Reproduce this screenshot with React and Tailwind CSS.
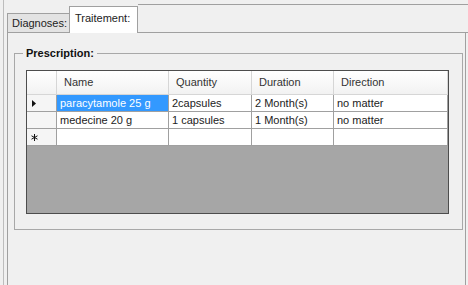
import React from 'react'

const columns = [
  { title: 'Name', width: 'w-[112px]' },
  { title: 'Quantity', width: 'w-[83px]' },
  { title: 'Duration', width: 'w-[82px]' },
  { title: 'Direction', width: 'w-[114px]' },
]

const rows = [
  { marker: 'current', cells: ['paracytamole 25 g', '2capsules', '2 Month(s)', 'no matter'] },
  { marker: null, cells: ['medecine 20 g', '1 capsules', '1 Month(s)', 'no matter'] },
  { marker: 'new', cells: ['', '', '', ''] },
]

const RowMarker = ({ type }) => {
  if (type === 'current') {
    return (
      <svg width="4" height="7" viewBox="0 0 4 7" className="ml-[5px]">
        <path d="M0 0 L4 3.5 L0 7 Z" fill="#111" />
      </svg>
    )
  }
  if (type === 'new') {
    return (
      <svg width="7" height="7" viewBox="0 0 7 7" className="ml-[4px] mt-[1px]">
        <path d="M3.5 0 V7 M0.5 1.8 L6.5 5.2 M0.5 5.2 L6.5 1.8" stroke="#111" strokeWidth="1" />
      </svg>
    )
  }
  return null
}

const App = () => {
  return (
    <div className="w-[468px] h-[285px] bg-[#f0f0f0] pl-[3px] overflow-hidden font-['Liberation_Sans',Arial,sans-serif] text-[11px] text-[#222]">
      <div className="h-full border-l border-[#bdbdbd] pl-[3px] flex flex-col">
        {/* onglets */}
        <div className="h-[33px] flex items-end shrink-0">
          <div className="w-[63px] h-[20px] bg-[#e3e3e3] border border-[#a0a0a0] flex items-center pl-[4px] pt-[1px]">
            Diagnoses:
          </div>
          <div className="-ml-px w-[69px] h-[27px] bg-white border border-b-0 border-[#a0a0a0] flex items-center pl-[5px] pb-[3px]">
            Traitement:
          </div>
          <div className="flex-1 h-[29px] border-t border-b border-[#a0a0a0]" />
        </div>

        {/* page */}
        <div className="flex-1 mr-[2px] border-l border-r border-[#a0a0a0] pl-[6px] pr-[2px] pt-[14px]">
          <fieldset className="border border-[#a8a8a8] pl-[11px] pr-[13px] pb-[15px]">
            <legend className="-ml-[3px] px-[3px] font-bold leading-[13px] text-[#111]">Prescription:</legend>

            {/* grille */}
            <div className="mt-[10px] h-[144px] border border-[#4d4d4d] bg-[#a6a6a6]">
              <div className="flex h-[24px]">
                <div className="w-[30px] bg-gradient-to-b from-white to-[#f2f2f2] border-r border-b border-[#d6d6d6]" />
                {columns.map((col) => (
                  <div
                    key={col.title}
                    className={`${col.width} bg-gradient-to-b from-white to-[#f2f2f2] border-r border-b border-[#d6d6d6] flex items-center pl-[7px] text-[#333]`}
                  >
                    {col.title}
                  </div>
                ))}
              </div>

              {rows.map((row, i) => (
                <div key={i} className="flex h-[17px]">
                  <div className="w-[30px] bg-[#f5f5f5] border-r border-b border-[#a0a0a0] flex items-center">
                    <RowMarker type={row.marker} />
                  </div>
                  {row.cells.map((cell, j) => {
                    const selected = i === 0 && j === 0
                    return (
                      <div
                        key={j}
                        className={`${columns[j].width} border-r border-b border-[#a0a0a0] flex items-center pl-[3px] ${
                          selected ? 'bg-[#3399ff] text-white' : 'bg-white text-[#222]'
                        }`}
                      >
                        {cell}
                      </div>
                    )
                  })}
                </div>
              ))}
            </div>
          </fieldset>
        </div>
      </div>
    </div>
  )
}

export default App
